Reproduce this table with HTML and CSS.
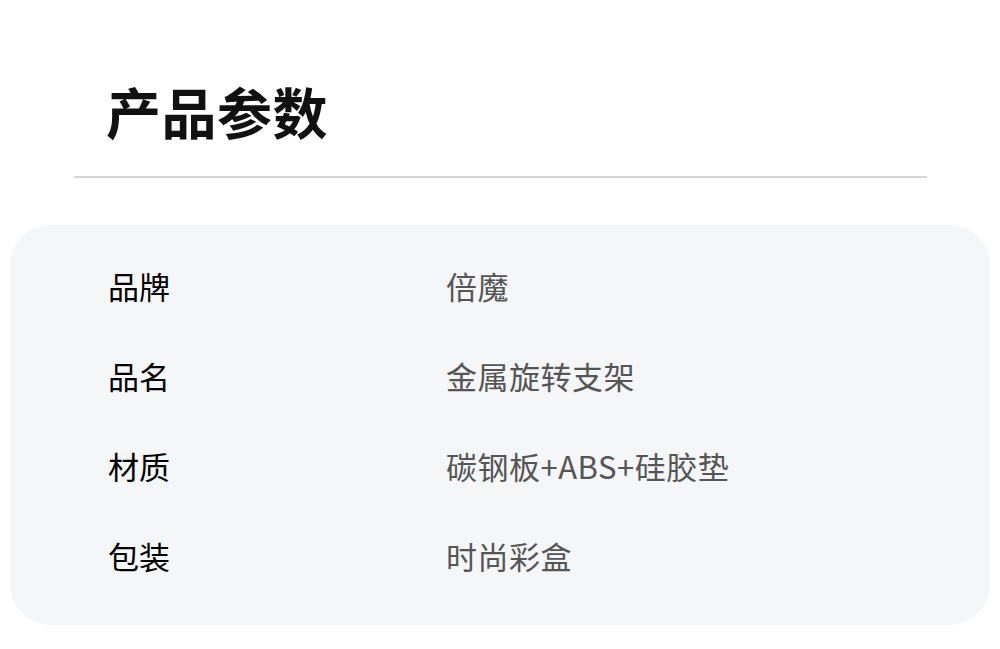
FILE: index.html
```html
<!DOCTYPE html>
<html lang="zh">
<head>
<meta charset="utf-8">
<link rel="stylesheet" href="styles.css">
</head>
<body>
<div class="page">
  <header class="head">
    <h1 class="title">产品参数</h1>
  </header>
  <div class="divider"></div>
  <section class="card">
    <div class="row"><div class="label">品牌</div><div class="value">倍魔</div></div>
    <div class="row"><div class="label">品名</div><div class="value">金属旋转支架</div></div>
    <div class="row"><div class="label">材质</div><div class="value">碳钢板+ABS+硅胶垫</div></div>
    <div class="row"><div class="label">包装</div><div class="value">时尚彩盒</div></div>
  </section>
</div>
</body>
</html>
```

FILE: styles.css
```css
* { box-sizing: border-box; }
html, body { margin: 0; padding: 0; background: #fff; }
body {
  font-family: "Noto Sans CJK SC", "Noto Sans", sans-serif;
  width: 1000px;
  height: 649px;
  overflow: hidden;
}
.page { padding-top: 76px; }
.head { padding-left: 106px; height: 100px; }
.title {
  margin: 0;
  font-size: 55px;
  line-height: 68px;
  font-weight: 700;
  color: #111;
  letter-spacing: 0.5px;
}
.divider {
  margin: 0 73px 0 74px;
  height: 2px;
  background: #d6d6d6;
}
.card {
  margin: 47px 10px 0 10px;
  height: 400px;
  border-radius: 40px;
  background: #f5f6f8;
  padding: 15px 0 0 98px;
  display: flex;
  flex-direction: column;
}
.row {
  display: flex;
  align-items: center;
  height: 90px;
}
.label {
  width: 338px;
  font-size: 31px;
  color: #000;
  font-weight: 400;
}
.value {
  font-size: 31px;
  color: #555;
  letter-spacing: 0.5px;
}
```
